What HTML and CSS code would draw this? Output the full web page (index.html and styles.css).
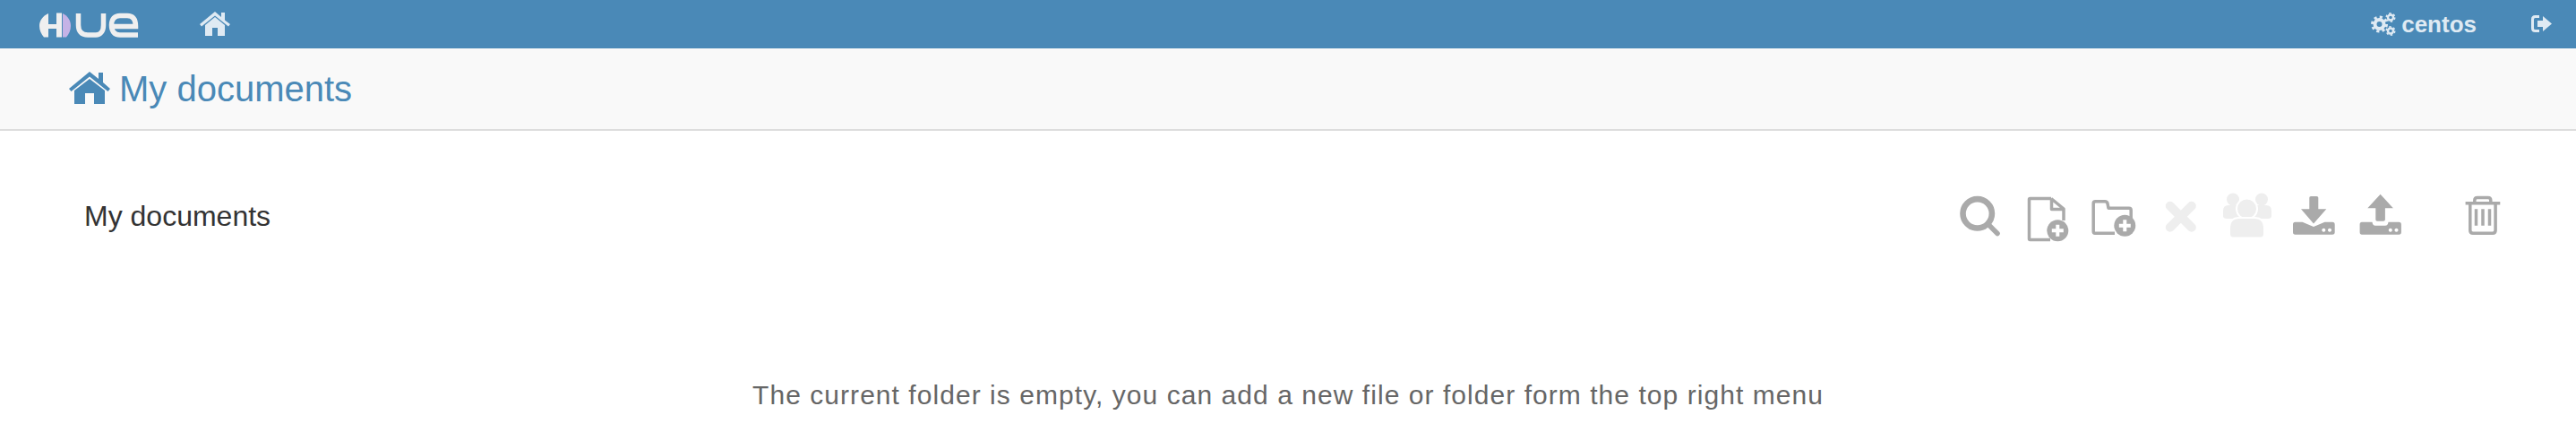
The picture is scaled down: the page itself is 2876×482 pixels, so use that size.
FILE: index.html
```html
<!DOCTYPE html>
<html lang="en">
<head>
<meta charset="utf-8">
<title>My documents</title>
<link rel="stylesheet" href="styles.css">
</head>
<body>
<nav class="navbar">
  <svg class="logo" width="112" height="30" viewBox="0 0 112 30" aria-label="Hue">
    <path class="logo-white" d="M10 1C3.500 4 0 9 0 15C0 20 2 24 5 27.500H10V18H19V27.500H25V.5H19V13H10Z"/>
    <path class="logo-lilac" d="M26 1C32 4 35 9 35 15C35 20 33 24 30 27.500H26Z"/>
    <path class="logo-stroke" d="M43.500 1V14C43.500 21 47 25 54 25H63C68 25 71.500 21 71.500 14V1"/>
    <path class="logo-stroke" d="M110 25H90C83 25 80.500 20 80.500 14C80.500 7 84 3.500 90 3.500H98C104 3.500 107.500 7 107.500 15.500H81"/>
  </svg>
  <svg class="nav-home" width="34" height="28" viewBox="0 0 34 28" aria-hidden="true">
    <path d="M17 6 6 15V27H14V18H20V27H28V15Z"/>
    <path d="M0 14 17 0 24 6V1H28V9.500L34 14 32 16.500 17 4.500 2 16.500Z"/>
  </svg>
  <div class="nav-right">
    <svg class="nav-gears" width="28" height="26" viewBox="0 0 28 26" aria-hidden="true">
      <circle class="gear-ring" cx="9.500" cy="13" r="5"/>
      <circle class="gear-teeth" cx="9.500" cy="13" r="8"/>
      <circle class="cog-ring" cx="22" cy="5.500" r="3"/>
      <circle class="cog-teeth" cx="22" cy="5.500" r="4.700"/>
      <circle class="cog-ring" cx="22" cy="20.500" r="3"/>
      <circle class="cog-teeth" cx="22" cy="20.500" r="4.700"/>
    </svg>
    <span class="user">centos</span>
    <svg class="nav-logout" width="24" height="20" viewBox="0 0 24 20" aria-hidden="true">
      <path class="logout-box" d="M9 1.500H4.500Q1.500 1.500 1.500 4.500V14.500Q1.500 17.500 4.500 17.500H9"/>
      <path d="M7 6H13V1L23 9.500 13 18V13H7Z"/>
    </svg>
  </div>
</nav>
<header class="subbar">
  <svg class="title-home" width="46" height="37" viewBox="0 0 46 37" aria-hidden="true">
    <path d="M23 8 6 21V36H18V24H28V36H40V21Z"/>
    <path d="M0 19 23 0 33 8V1H38V12L46 19 43.500 22 23 5.500 2.500 22Z"/>
  </svg>
  <h1 class="title">My documents</h1>
</header>
<main class="content">
  <div class="toolbar-row">
    <h2 class="crumb">My documents</h2>
    <div class="toolbar">
      <svg class="tool" width="54" height="60" viewBox="0 0 54 60" aria-hidden="true">
        <circle class="s" cx="23.700" cy="27.300" r="16.200"/>
        <path class="s round" d="M36 39.500 46 49.500"/>
      </svg>
      <svg class="tool" width="54" height="60" viewBox="0 0 54 60" aria-hidden="true">
        <path class="s thin" d="M31 10.500H7.500Q6.500 10.500 6.500 11.500V55.500Q6.500 56.500 7.500 56.500H30M31 10.500 45 22V35M31.500 10.500V22.500H45"/>
        <circle class="f" cx="38.300" cy="46.300" r="12"/>
        <path class="w" d="M38.300 39.800V52.800M31.800 46.300H44.800"/>
      </svg>
      <svg class="tool" width="54" height="60" viewBox="0 0 54 60" aria-hidden="true">
        <path class="s thin" d="M28 49.200H6Q4.200 49.200 4.200 47V16Q4.200 13.800 6.500 13.800H17Q19.500 13.800 20 16L21 21.200H44Q46.200 21.200 46.200 23.500V33"/>
        <circle class="f" cx="39.300" cy="40.700" r="12"/>
        <path class="w" d="M39.300 34.200V47.200M32.800 40.700H45.800"/>
      </svg>
      <svg class="tool" width="54" height="60" viewBox="0 0 54 60" aria-hidden="true">
        <path class="x" d="M15.800 18.700 39.800 42.700M39.800 18.700 15.800 42.700"/>
      </svg>
      <svg class="tool faint" width="54" height="60" viewBox="0 0 54 60" aria-hidden="true">
        <circle cx="11" cy="11.500" r="7"/><circle cx="43" cy="11.500" r="7"/>
        <path d="M0 24Q0 18 6 18H16Q22 18 22 24V30Q22 33 18 33H4Q0 33 0 30Z"/>
        <path d="M32 24Q32 18 38 18H48Q54 18 54 24V30Q54 33 50 33H36Q32 33 32 30Z"/>
        <circle class="ring" cx="26.500" cy="22" r="11.500"/>
        <path class="ring" d="M7 44Q7 32 18 32H35Q46 32 46 44V50Q46 54.500 42 54.500H11Q7 54.500 7 50Z"/>
      </svg>
      <svg class="tool dark" width="54" height="60" viewBox="0 0 54 60" aria-hidden="true">
        <path d="M22.300 9.500Q22.300 8 24 8H30.500Q32.300 8 32.300 9.500V22.300H41.300L27 38.500 13 22.300H22.300Z"/>
        <path fill-rule="evenodd" d="M6.500 36.700H14.500L27 42 39.500 36.700H48Q50.700 36.700 50.700 39.400V48Q50.700 50.700 48 50.700H6.500Q4 50.700 4 48V39.400Q4 36.700 6.500 36.700ZM38.300 43.700a2 2 0 1 0 .01 0ZM45 43.700a2 2 0 1 0 .01 0Z"/>
      </svg>
      <svg class="tool dark" width="54" height="60" viewBox="0 0 54 60" aria-hidden="true">
        <path d="M26.600 5.700 40.900 21.300H31.900V34Q31.900 35.700 30 35.700H23Q21.300 35.700 21.300 34V21.300H12.300Z"/>
        <path fill-rule="evenodd" d="M6 36.700H17.500Q18 40.700 21 40.700H32Q35 40.700 35.500 36.700H47.300Q49.900 36.700 49.900 39.400V48Q49.900 50.700 47.300 50.700H6Q3.600 50.700 3.600 48V39.400Q3.600 36.700 6 36.700ZM37.800 43.700a2 2 0 1 0 .01 0ZM44.500 43.700a2 2 0 1 0 .01 0Z"/>
      </svg>
      <svg class="tool trash" width="54" height="60" viewBox="0 0 54 60" aria-hidden="true">
        <path class="s thin" d="M7.600 15.700H46.300M17.800 15.700V12.500Q17.800 9.500 20.800 9.500H32.800Q35.800 9.500 35.800 12.500V15.700M12.800 15.700V46Q12.800 49.200 16 49.200H38Q41.100 49.200 41.100 46V15.700"/>
        <path class="s bars" d="M19.500 22.300V40.700M27 22.300V40.700M34.500 22.300V40.700"/>
      </svg>
    </div>
  </div>
  <p class="empty">The current folder is empty, you can add a new file or folder form the top right menu</p>
</main>
</body>
</html>
```
FILE: styles.css
```css
* { box-sizing: border-box; }
html, body { margin: 0; padding: 0; }
body { background: #fff; font-family: "Liberation Sans", Arial, sans-serif; height: 482px; overflow: hidden; }

.navbar { height: 54px; background: #4a89b7; display: flex; align-items: center; padding-left: 44px; padding-right: 26px; color: #dfeaf3; }
.logo { display: block; margin-top: 4px; flex: none; }
.logo-white { fill: #efefef; }
.logo-lilac { fill: #c5b3e6; }
.logo-stroke { fill: none; stroke: #efefef; stroke-width: 5.500; }
.nav-home { margin-left: 67px; margin-top: -1px; fill: #dfeaf3; flex: none; }
.nav-right { margin-left: auto; display: flex; align-items: center; }
.nav-gears { fill: none; stroke: #dfeaf3; flex: none; }
.gear-ring { stroke-width: 4; }
.gear-teeth { stroke-width: 3; stroke-dasharray: 3.140 3.140; }
.cog-ring { stroke-width: 2.400; }
.cog-teeth { stroke-width: 1.600; stroke-dasharray: 2.460 2.460; }
.user { font-size: 26px; font-weight: 700; margin-left: 6px; }
.nav-logout { margin-left: 61px; fill: #dfeaf3; flex: none; }
.logout-box { fill: none; stroke: #dfeaf3; stroke-width: 3; }

.subbar { height: 92px; background: #f9f9f9; border-bottom: 2px solid #ddd; display: flex; align-items: center; padding-left: 77px; color: #4a89b7; }
.title-home { fill: #4a89b7; flex: none; margin-top: -2px; }
.title { margin: 0 0 0 10px; font-size: 40px; font-weight: 400; line-height: 56px; }

.content { padding: 0 77px 0 94px; }
.toolbar-row { display: flex; align-items: center; justify-content: space-between; height: 60px; margin-top: 65px; }
.crumb { margin: 0; font-size: 32px; font-weight: 400; color: #333; }
.toolbar { display: flex; gap: 20.400px; }
.tool { display: block; flex: none; }
.trash { margin-left: 40px; }
.s { fill: none; stroke: #aaa; stroke-width: 6.600; }
.s.thin { stroke-width: 3.500; stroke-linejoin: round; }
.s.bars { stroke-width: 3.500; }
.s.round { stroke-linecap: round; stroke-width: 5.500; }
.f { fill: #aaa; }
.w { fill: none; stroke: #fff; stroke-width: 4; }
.x { fill: none; stroke: #eee; stroke-width: 10; stroke-linecap: round; }
.faint { fill: #eee; }
.ring { stroke: #fff; stroke-width: 2; }
.dark { fill: #aaa; }

.empty { margin: 150px 0 0 -94px; width: 2876px; text-align: center; font-size: 30px; line-height: 40px; color: #666; letter-spacing: 1.050px; }
```
